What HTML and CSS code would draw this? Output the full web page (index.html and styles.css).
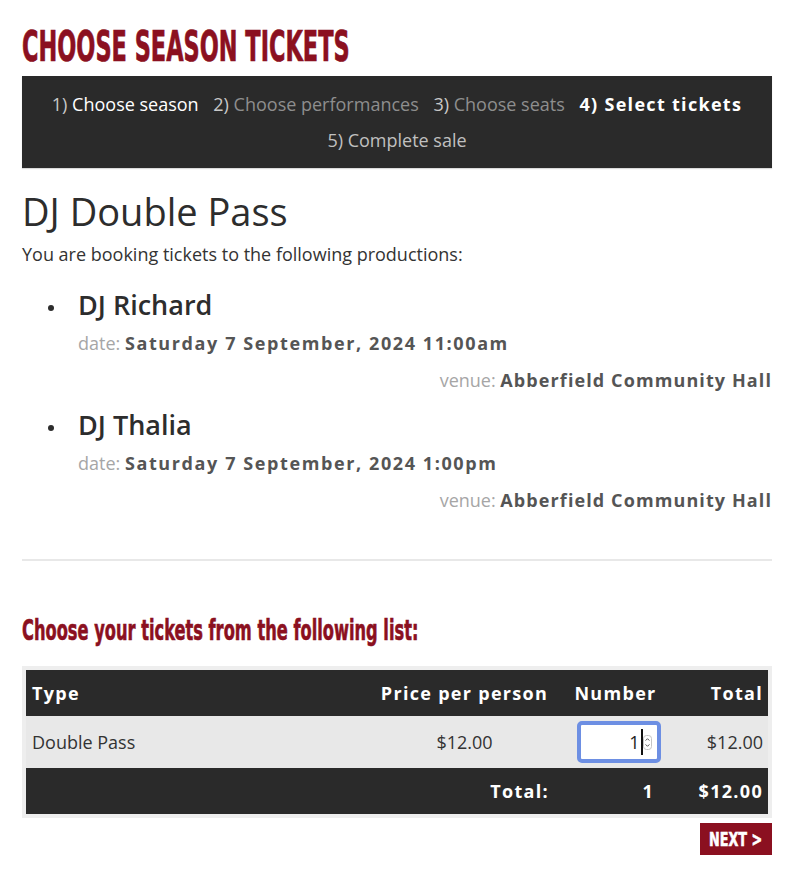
FILE: index.html
```html
<!DOCTYPE html>
<html lang="en">
<head>
<meta charset="utf-8">
<title>Choose Season Tickets</title>
<link rel="stylesheet" href="styles.css">
</head>
<body>
<div class="page">
  <h1 class="title"><span class="cond">CHOOSE SEASON TICKETS</span></h1>
  <nav class="steps">
    <span class="step done"><span class="num">1)</span> <a class="link">Choose season</a></span>
    <span class="step"><span class="num">2)</span> <span class="muted">Choose performances</span></span>
    <span class="step"><span class="num">3)</span> <span class="muted">Choose seats</span></span>
    <span class="step current">4) Select tickets</span>
    <span class="step future">5) Complete sale</span>
  </nav>

  <h2 class="pass">DJ Double Pass</h2>
  <p class="intro">You are booking tickets to the following productions:</p>

  <ul class="prods">
    <li class="prod">
      <h3 class="prod-name"><span class="dot"></span>DJ Richard</h3>
      <div class="meta"><span class="label">date:</span> <span class="val">Saturday 7 September, 2024 11:00am</span></div>
      <div class="meta venue"><span class="label">venue:</span> <span class="val">Abberfield Community Hall</span></div>
    </li>
    <li class="prod">
      <h3 class="prod-name"><span class="dot"></span>DJ Thalia</h3>
      <div class="meta"><span class="label">date:</span> <span class="val">Saturday 7 September, 2024 1:00pm</span></div>
      <div class="meta venue"><span class="label">venue:</span> <span class="val">Abberfield Community Hall</span></div>
    </li>
  </ul>

  <hr class="rule">

  <h3 class="subtitle"><span class="cond">Choose your tickets from the following list:</span></h3>

  <table class="tickets">
    <colgroup>
      <col class="c-type"><col class="c-price"><col class="c-num"><col class="c-total">
    </colgroup>
    <thead>
      <tr>
        <th class="left">Type</th>
        <th class="center">Price per person</th>
        <th class="center">Number</th>
        <th class="right">Total</th>
      </tr>
    </thead>
    <tbody>
      <tr>
        <td class="left">Double Pass</td>
        <td class="center">$12.00</td>
        <td class="center">
          <div class="qty"><span class="qty-val">1</span><span class="caret"></span><svg class="spin" width="9" height="15" viewBox="0 0 9 15"><rect x="0.5" y="0.5" width="8" height="14" rx="3" fill="#fff" stroke="#c4c4c4"/><path d="M2.6 5.6 L4.5 3.7 L6.4 5.6" fill="none" stroke="#555" stroke-width="1"/><path d="M2.6 9.4 L4.5 11.3 L6.4 9.4" fill="none" stroke="#555" stroke-width="1"/></svg></div>
        </td>
        <td class="right">$12.00</td>
      </tr>
    </tbody>
    <tfoot>
      <tr>
        <td class="right" colspan="2">Total:</td>
        <td class="right numtot">1</td>
        <td class="right">$12.00</td>
      </tr>
    </tfoot>
  </table>

  <div class="actions">
    <button class="next" type="button"><span class="cond">NEXT &gt;</span></button>
  </div>
</div>
</body>
</html>
```

FILE: styles.css
```css
* { box-sizing: border-box; }

html, body {
  margin: 0;
  padding: 0;
  background: #ffffff;
}

body {
  font-family: "Open Sans", "Noto Sans", sans-serif;
  color: #333333;
  font-size: 18px;
}

.page {
  width: 794px;
  padding: 0 22px;
}

.cond {
  display: inline-block;
  font-family: "Liberation Sans Narrow", "DejaVu Sans Condensed", "DejaVu Sans", sans-serif;
  font-stretch: condensed;
  font-weight: 700;
  transform-origin: left center;
  white-space: nowrap;
  -webkit-text-stroke: 0.6px currentColor;
}

.title {
  margin: 0;
  padding-top: 20px;
  height: 76px;
  color: #8b1020;
  font-size: 43px;
  line-height: 50px;
  font-weight: 700;
}

.title .cond {
  transform: scaleX(0.58);
  -webkit-text-stroke: 0.7px currentColor;
}

.steps {
  background: #2a2a2a;
  padding: 10px 16px;
  text-align: center;
  line-height: 36px;
  font-size: 18px;
  color: #c8c8c8;
  box-shadow: 0 1px 1px rgba(0, 0, 0, 0.15);
}

.step {
  display: inline-block;
  margin: 0 5px;
}

.step .link { color: #ffffff; }
.step .muted { color: #8e8e8e; }
.step.current {
  color: #ffffff;
  font-weight: 700;
  letter-spacing: 1.3px;
}
.step.future { color: #c0c0c0; }

.pass {
  margin: 20px 0 0;
  font-size: 38px;
  line-height: 46px;
  font-weight: 400;
  color: #2d2d2d;
}

.intro {
  margin: 8px 0 0;
  line-height: 24px;
  font-size: 18px;
}

.prods {
  list-style: none;
  margin: 23px 0 0;
  padding: 0 0 0 56px;
}

.prod + .prod { margin-top: 17px; }

.prod-name {
  margin: 0;
  font-size: 27px;
  line-height: 32px;
  font-weight: 600;
  color: #2d2d2d;
}

.dot {
  display: inline-block;
  width: 6px;
  height: 6px;
  border-radius: 50%;
  background: #2d2d2d;
  margin-left: -30px;
  margin-right: 24px;
  vertical-align: middle;
}

.meta {
  margin-top: 10px;
  line-height: 24px;
  font-size: 18px;
}

.meta.venue {
  margin-top: 13px;
  text-align: right;
}

.meta .label {
  color: #a6a6a6;
}

.meta .val {
  font-weight: 700;
  color: #555555;
  letter-spacing: 1.6px;
}

.meta.venue .val {
  letter-spacing: 1.1px;
}

.rule {
  margin: 47px 0 0;
  border: 0;
  height: 2px;
  background: #e8e8e8;
}

.subtitle {
  margin: 0;
  padding-top: 50px;
  height: 105px;
  color: #8b1020;
  font-size: 28px;
  line-height: 36px;
}

.subtitle .cond {
  transform: scaleX(0.645);
}

.tickets {
  width: 750px;
  border-collapse: separate;
  border-spacing: 0;
  border: 4px solid #eeeeee;
  table-layout: fixed;
  font-size: 18px;
}

.c-type { width: 348px; }
.c-price { width: 180px; }
.c-num { width: 122px; }
.c-total { width: 92px; }

.tickets th,
.tickets td {
  padding: 0 5px 0 6px;
  white-space: nowrap;
}

.tickets thead tr { height: 46px; }
.tickets tbody tr { height: 52px; }
.tickets tfoot tr { height: 46px; }

.tickets thead th,
.tickets tfoot td {
  background: #2a2a2a;
  color: #ffffff;
  font-weight: 700;
  letter-spacing: 1.3px;
  font-size: 18px;
}

.tickets tbody td {
  background: #e8e8e8;
  color: #333333;
}

.left { text-align: left; }
.center { text-align: center; }
.right { text-align: right; }

.tickets td.numtot { padding-right: 22px; }

.qty {
  display: inline-flex;
  align-items: center;
  justify-content: flex-end;
  width: 84px;
  height: 42px;
  margin-left: 6px;
  padding-right: 5px;
  background: #ffffff;
  border: 4px solid #6d8fe3;
  border-radius: 5px;
  vertical-align: middle;
  letter-spacing: 0;
}

.qty-val {
  color: #222222;
  line-height: 20px;
}

.caret {
  display: inline-block;
  width: 2px;
  height: 26px;
  background: #111111;
  margin: 0 0 0 1px;
}

.spin {
  display: block;
}

.actions {
  display: flex;
  justify-content: flex-end;
  margin-top: 5px;
}

.next {
  width: 72px;
  height: 32px;
  padding: 0 0 0 9px;
  border: 0;
  border-radius: 0;
  background: #8b1020;
  color: #ffffff;
  font-size: 20px;
  text-align: left;
  line-height: 32px;
}

.next .cond {
  transform: scaleX(0.71);
}
```
